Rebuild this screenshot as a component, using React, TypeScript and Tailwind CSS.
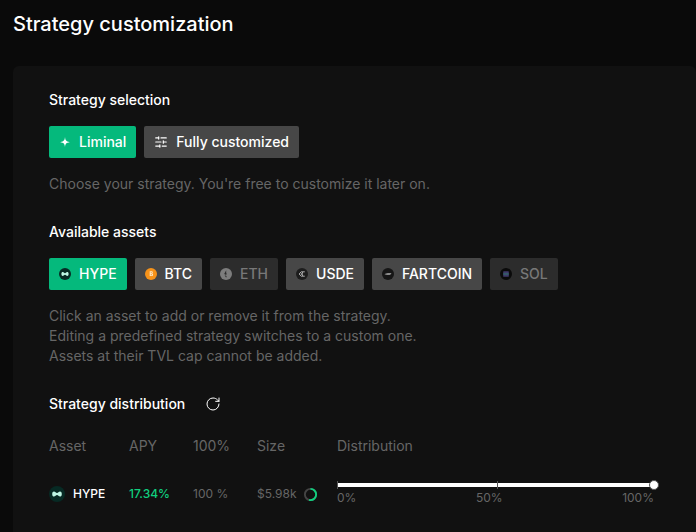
import { RotateCw, SlidersHorizontal } from "lucide-react";
import type { ReactNode } from "react";

function HypeIcon({ className }: { className: string }) {
  return (
    <svg viewBox="0 0 12 12" className={className}>
      <circle cx="6" cy="6" r="6" fill="#072a24" />
      <path
        d="M2.4 6c0-1.3.6-1.9 1.3-1.9 1.1 0 1.4 1.2 2.3 1.2s1.200-1.200 2.300-1.200c.7 0 1.300.6 1.300 1.900s-.6 1.900-1.300 1.900C7.200 7.900 6.900 6.700 6 6.700s-1.200 1.200-2.300 1.200C3 7.900 2.400 7.300 2.400 6Z"
        fill="#bdf5e3"
      />
    </svg>
  );
}

function BtcIcon() {
  return (
    <svg viewBox="0 0 12 12" className="size-3">
      <circle cx="6" cy="6" r="6" fill="#f7931a" />
      <path
        d="M4.700 3.300h1.900c.8 0 1.200.5 1.200 1.200 0 .5-.2.800-.6 1 .6.2.9.6.9 1.200 0 .9-.6 1.400-1.500 1.400H4.700Zm1 1v1h.8c.3 0 .4-.2.400-.5s-.1-.5-.4-.5Zm0 1.900v1h.9c.3 0 .5-.2.500-.5s-.2-.5-.5-.5Z"
        fill="#fde9c8"
      />
    </svg>
  );
}

function EthIcon() {
  return (
    <svg viewBox="0 0 12 12" className="size-3">
      <circle cx="6" cy="6" r="6" fill="#7d7d7d" />
      <path d="M6.200 2.200 4.200 6l2 1 .4-1.200-.4-1ZM4.600 7.300l1.600 2.500.4-1.800Z" fill="#2d2d2d" />
    </svg>
  );
}

function UsdeIcon() {
  return (
    <svg viewBox="0 0 12 12" className="size-3">
      <circle cx="6" cy="6" r="6" fill="#1d1d1d" />
      <path
        d="M8.800 3.800H5.200L3.100 6l2.100 2.200h3.600M4.800 6h2.100M6.900 3.900 5.700 6l1.200 2.100"
        fill="none"
        stroke="#c9c9c9"
        strokeWidth="0.8"
      />
    </svg>
  );
}

function FartcoinIcon() {
  return (
    <svg viewBox="0 0 12 12" className="size-3">
      <circle cx="6" cy="6" r="6" fill="#161616" />
      <path d="M2.500 6.300c1.500-1 4.500-1.300 7-.9-.7.900-1.500 1.300-2.700 1.300-1.600 0-2.800.2-4.300-.4Z" fill="#b5b5b5" />
    </svg>
  );
}

function SolIcon() {
  return (
    <svg viewBox="0 0 12 12" className="size-3">
      <circle cx="6" cy="6" r="6" fill="#0a0a0a" />
      <rect x="3.200" y="3.200" width="5.600" height="5.600" rx="0.600" fill="#3f3a6b" />
      <rect x="3.200" y="5.400" width="5.600" height="1.200" fill="#2f6a68" />
    </svg>
  );
}

function Spark() {
  return (
    <svg viewBox="0 0 12 12" className="size-3">
      <path d="M6 .8c.2 3.200.9 4.500 4.800 5.500-3.500.4-4.500 1.400-4.800 4.900-.3-3.500-1.300-4.500-4.800-4.900C5.100 5.300 5.800 4 6 .8Z" fill="#fff" />
    </svg>
  );
}

function Chip({
  icon,
  label,
  tone,
}: {
  icon: ReactNode;
  label: string;
  tone: "active" | "idle" | "off";
}) {
  const toneClass =
    tone === "active"
      ? "bg-[#05b97c] text-white"
      : tone === "idle"
        ? "bg-[#474747] text-white"
        : "bg-[#2c2c2c] text-[#787878]";

  return (
    <div className={`flex h-8 items-center gap-2 rounded-[2px] px-[10px] text-sm font-medium ${toneClass}`}>
      {icon}
      <span>{label}</span>
    </div>
  );
}

export default function App() {
  return (
    <div className="h-[532px] w-[696px] overflow-hidden bg-[#0a0a0a] font-['Inter',sans-serif] text-white">
      <h1 className="px-[13px] pt-[10px] text-xl leading-7 font-medium">Strategy customization</h1>

      <div className="mt-[28px] ml-[13px] h-[500px] rounded-t-md bg-[#111111] pt-6 pl-9">
        <h2 className="text-sm leading-5 font-medium">Strategy selection</h2>
        <div className="mt-4 flex gap-2">
          <Chip icon={<Spark />} label="Liminal" tone="active" />
          <Chip icon={<SlidersHorizontal className="size-[14px] rotate-180" />} label="Fully customized" tone="idle" />
        </div>
        <p className="mt-4 text-sm leading-5 text-[#666666]">Choose your strategy. You're free to customize it later on.</p>

        <h2 className="mt-[28px] text-sm leading-5 font-medium">Available assets</h2>
        <div className="mt-4 flex gap-2">
          <Chip icon={<HypeIcon className="size-3" />} label="HYPE" tone="active" />
          <Chip icon={<BtcIcon />} label="BTC" tone="idle" />
          <Chip icon={<EthIcon />} label="ETH" tone="off" />
          <Chip icon={<UsdeIcon />} label="USDE" tone="idle" />
          <Chip icon={<FartcoinIcon />} label="FARTCOIN" tone="idle" />
          <Chip icon={<SolIcon />} label="SOL" tone="off" />
        </div>
        <p className="mt-4 text-sm leading-5 text-[#666666]">
          Click an asset to add or remove it from the strategy.
          <br />
          Editing a predefined strategy switches to a custom one.
          <br />
          Assets at their TVL cap cannot be added.
        </p>

        <div className="mt-[28px] flex items-center gap-5">
          <h2 className="text-sm leading-5 font-medium">Strategy distribution</h2>
          <RotateCw className="size-4" strokeWidth={1.5} />
        </div>

        <div className="mt-4 grid grid-cols-[80px_64px_64px_80px_317px] text-sm leading-5 text-[#666666]">
          <span className="py-[6px]">Asset</span>
          <span className="py-[6px]">APY</span>
          <span className="py-[6px]">100%</span>
          <span className="py-[6px]">Size</span>
          <span className="py-[6px]">Distribution</span>

          <div className="mt-[20px] flex items-center gap-2 text-xs font-medium text-white">
            <HypeIcon className="size-4" />
            HYPE
          </div>
          <div className="mt-[20px] flex items-center text-xs font-medium text-[#10cf7f]">17.34%</div>
          <div className="mt-[20px] flex items-center text-xs text-[#666666]">100 %</div>
          <div className="mt-[20px] flex items-center gap-[6px] text-xs text-[#666666]">
            $5.98k
            <svg viewBox="0 0 16 16" className="size-[15px] -rotate-90">
              <circle cx="8" cy="8" r="6" fill="none" stroke="#444444" strokeWidth="2" />
              <circle cx="8" cy="8" r="6" fill="none" stroke="#10cf7f" strokeWidth="2" strokeDasharray="20 38" />
            </svg>
          </div>
          <div className="mt-[20px] pt-[1px]">
            <div className="relative h-1 bg-white">
              <span className="absolute top-[-2px] left-0 h-2 w-px bg-[#555555]" />
              <span className="absolute top-[-2px] left-[160px] h-2 w-px bg-[#555555]" />
              <span className="absolute top-[-3px] right-[-5px] size-[10px] rounded-full border border-[#555555] bg-white" />
            </div>
            <div className="mt-[3px] flex justify-between text-xs leading-4">
              <span>0%</span>
              <span>50%</span>
              <span>100%</span>
            </div>
          </div>
        </div>
      </div>
    </div>
  );
}
